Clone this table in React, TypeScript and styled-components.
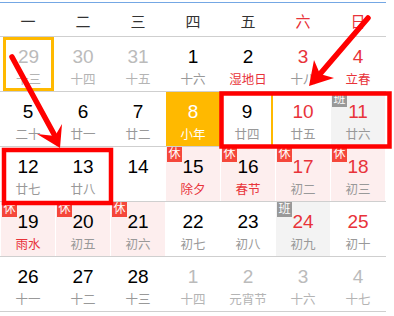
import React from 'react';
import styled, {createGlobalStyle, css} from 'styled-components';

const GlobalStyle = createGlobalStyle`
    body {
        margin: 0;
        background: #fff;
        font-family: "Liberation Sans", "Noto Sans CJK SC", sans-serif;
    }
`;

type Bg = 'none' | 'rest' | 'work' | 'today';
type Tone = 'normal' | 'red' | 'muted' | 'today';
type Ring = 'none' | 'full' | 'right';

interface Day {
    n: number;
    l?: string;
    bg?: Bg;
    num?: Tone;
    lunar?: Tone;
    badge?: 'rest' | 'work';
    ring?: Ring;
}

const weekdays = ['一', '二', '三', '四', '五', '六', '日'];

const rows: Day[][] = [
    [
        {n: 29, l: '十三', num: 'muted', lunar: 'muted', ring: 'full'},
        {n: 30, l: '十四', num: 'muted', lunar: 'muted'},
        {n: 31, l: '十五', num: 'muted', lunar: 'muted'},
        {n: 1, l: '十六'},
        {n: 2, l: '湿地日', lunar: 'red'},
        {n: 3, l: '十八', num: 'red'},
        {n: 4, l: '立春', num: 'red', lunar: 'red'},
    ],
    [
        {n: 5, l: '二十'},
        {n: 6, l: '廿一'},
        {n: 7, l: '廿二'},
        {n: 8, l: '小年', bg: 'today', num: 'today', lunar: 'today'},
        {n: 9, l: '廿四', ring: 'right'},
        {n: 10, l: '廿五', num: 'red'},
        {n: 11, l: '廿六', num: 'red', bg: 'work', badge: 'work'},
    ],
    [
        {n: 12, l: '廿七'},
        {n: 13, l: '廿八'},
        {n: 14},
        {n: 15, l: '除夕', lunar: 'red', bg: 'rest', badge: 'rest'},
        {n: 16, l: '春节', lunar: 'red', bg: 'rest', badge: 'rest'},
        {n: 17, l: '初二', num: 'red', bg: 'rest', badge: 'rest'},
        {n: 18, l: '初三', num: 'red', bg: 'rest', badge: 'rest'},
    ],
    [
        {n: 19, l: '雨水', lunar: 'red', bg: 'rest', badge: 'rest'},
        {n: 20, l: '初五', bg: 'rest', badge: 'rest'},
        {n: 21, l: '初六', bg: 'rest', badge: 'rest'},
        {n: 22, l: '初七'},
        {n: 23, l: '初八'},
        {n: 24, l: '初九', num: 'red', bg: 'work', badge: 'work'},
        {n: 25, l: '初十', num: 'red'},
    ],
    [
        {n: 26, l: '十一'},
        {n: 27, l: '十二'},
        {n: 28, l: '十三'},
        {n: 1, l: '十四', num: 'muted', lunar: 'muted'},
        {n: 2, l: '元宵节', num: 'muted', lunar: 'muted'},
        {n: 3, l: '十六', num: 'muted', lunar: 'muted'},
        {n: 4, l: '十七', num: 'muted', lunar: 'muted'},
    ],
];

const bgColors: Record<Bg, string> = {
    none: '#fff',
    rest: '#fdeeee',
    work: '#f3f3f3',
    today: '#ffb900',
};

const numColors: Record<Tone, string> = {
    normal: '#000',
    red: '#e8333a',
    muted: '#bbb',
    today: '#fff',
};

const lunarColors: Record<Tone, string> = {
    normal: '#999',
    red: '#e8333a',
    muted: '#b4b4b4',
    today: '#fff',
};

const Wrap = styled.div`
    position: relative;
    width: 386px;
    padding-top: 2px;
`;

const Calendar = styled.div`
    border-top: 1px solid #74a7e4;
`;

const Header = styled.div`
    display: grid;
    grid-template-columns: repeat(7, 54px);
    column-gap: 1px;
    padding-left: 1px;
    height: 33px;
    align-items: center;
    border-bottom: 1px solid #cfcfcf;
`;

const Weekday = styled.div<{$weekend: boolean}>`
    text-align: center;
    font-size: 15px;
    color: ${p => (p.$weekend ? '#e8333a' : '#333')};
    padding-top: 2px;
`;

const Week = styled.div`
    display: grid;
    grid-template-columns: repeat(7, 54px);
    column-gap: 1px;
    padding-left: 1px;
    height: 54px;
    border-bottom: 1px solid #cfcfcf;
`;

const Cell = styled.div<{$bg: Bg; $ring: Ring}>`
    position: relative;
    display: flex;
    flex-direction: column;
    align-items: center;
    background: ${p => bgColors[p.$bg]};
    box-sizing: border-box;
    padding-top: 9px;
    ${p => p.$ring === 'full' && css`
        box-shadow: inset 0 0 0 3px #ffb900;
        margin: 0 1px 0 2px;
    `}
    ${p => p.$ring === 'right' && css`
        box-shadow: inset -2px 0 0 #ffb900;
        margin-right: 2px;
    `}
`;

const Num = styled.div<{$tone: Tone}>`
    font-size: 19px;
    line-height: 22px;
    color: ${p => numColors[p.$tone]};
`;

const Lunar = styled.div<{$tone: Tone}>`
    font-size: 12.5px;
    line-height: 16px;
    margin-top: 4px;
    color: ${p => lunarColors[p.$tone]};
`;

const Badge = styled.span<{$kind: 'rest' | 'work'}>`
    position: absolute;
    left: 1px;
    top: 0;
    width: 15px;
    height: 15px;
    font-size: 12px;
    line-height: 15px;
    text-align: center;
    color: #fff;
    background: ${p => (p.$kind === 'rest' ? '#f5473b' : '#999')};
`;

const Overlay = styled.svg`
    position: absolute;
    left: 0;
    top: 0;
    pointer-events: none;
`;

type Pt = [number, number];

function Arrow({from, tip, barbs}: {from: Pt; tip: Pt; barbs: [Pt, Pt, Pt]}) {
    const pts = [tip, barbs[0], barbs[1], barbs[2]].map(p => p.join(',')).join(' ');
    return <>
        <line x1={from[0]} y1={from[1]} x2={barbs[1][0]} y2={barbs[1][1]} stroke="#ff0000" strokeWidth={5.5} strokeLinecap="round" />
        <polygon points={pts} fill="#ff0000" />
    </>;
}

export default function App() {
    return <>
        <GlobalStyle />
        <Wrap>
            <Calendar>
                <Header>
                    {weekdays.map((w, i) => <Weekday key={w} $weekend={i >= 5}>{w}</Weekday>)}
                </Header>
                {rows.map((week, r) => <Week key={r}>
                    {week.map((d, c) => <Cell key={c} $bg={d.bg || 'none'} $ring={d.ring || 'none'}>
                        {d.badge && <Badge $kind={d.badge}>{d.badge === 'rest' ? '休' : '班'}</Badge>}
                        <Num $tone={d.num || 'normal'}>{d.n}</Num>
                        {d.l && <Lunar $tone={d.lunar || 'normal'}>{d.l}</Lunar>}
                    </Cell>)}
                </Week>)}
            </Calendar>
            <Overlay width={394} height={316} viewBox="0 0 394 316">
                <rect x={221.5} y={93.5} width={168} height={53} fill="none" stroke="#ff0000" strokeWidth={4.5} />
                <rect x={4} y={150} width={107} height={53} fill="none" stroke="#ff0000" strokeWidth={4.5} />
                <Arrow from={[12, 57]} tip={[60, 148]} barbs={[[62, 124], [55, 136], [37, 134]]} />
                <Arrow from={[368, 18]} tip={[309, 86]} barbs={[[314, 60], [320, 74], [334, 78]]} />
            </Overlay>
        </Wrap>
    </>;
}
